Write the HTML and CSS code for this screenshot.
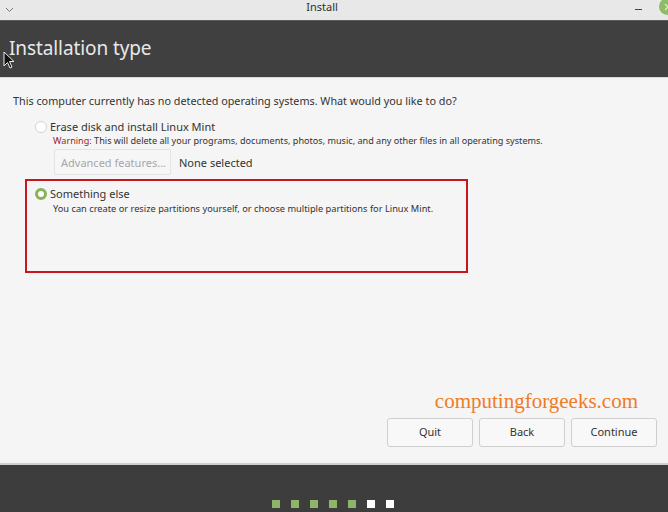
FILE: index.html
```html
<!DOCTYPE html>
<html>
<head>
<meta charset="utf-8">
<link rel="stylesheet" href="styles.css">
</head>
<body>
<div class="window">
  <div class="titlebar">
    <svg class="chev" width="9" height="6" viewBox="0 0 9 6"><path d="M1 1 L4.5 4.5 L8 1" fill="none" stroke="#777" stroke-width="1"/></svg>
    <div class="wtitle">Install</div>
    <div class="wctrls">
      <span class="minimize"></span>
      <span class="close"><svg width="10" height="10" viewBox="0 0 10 10"><path d="M2 2 L8 8 M8 2 L2 8" stroke="#d8ecc4" stroke-width="1.4"/></svg></span>
    </div>
  </div>
  <div class="header">
    <h1 class="htitle">Installation type</h1>
  </div>
  <div class="main">
    <p class="question">This computer currently has no detected operating systems. What would you like to do?</p>
    <div class="opt opt-erase">
      <div class="optrow"><span class="radio"></span><span class="optlabel">Erase disk and install Linux Mint</span></div>
      <div class="desc"><span class="warn">Warning:</span> This will delete all your programs, documents, photos, music, and any other files in all operating systems.</div>
      <div class="advrow"><span class="advbtn">Advanced features...</span><span class="none">None selected</span></div>
    </div>
    <div class="highlight">
      <div class="optrow"><span class="radio checked"></span><span class="optlabel">Something else</span></div>
      <div class="desc">You can create or resize partitions yourself, or choose multiple partitions for Linux Mint.</div>
    </div>
    <div class="spacer"></div>
    <div class="watermark">computingforgeeks.com</div>
    <div class="buttons">
      <button class="btn">Quit</button>
      <button class="btn">Back</button>
      <button class="btn">Continue</button>
    </div>
  </div>
  <div class="footer">
    <div class="dots">
      <span class="dot done"></span><span class="dot done"></span><span class="dot done"></span><span class="dot done"></span><span class="dot done"></span><span class="dot"></span><span class="dot"></span>
    </div>
  </div>
  <svg class="cursor" width="12" height="18" viewBox="0 0 12 18"><path d="M1 1 L1 15 L4.5 11.5 L7 17 L9 16 L6.5 10.5 L11 10.5 Z" fill="#111" stroke="#eee" stroke-width="1"/></svg>
</div>
</body>
</html>
```

FILE: styles.css
```css
* { box-sizing: border-box; }
html, body { margin: 0; padding: 0; }
body { width: 668px; height: 512px; overflow: hidden; font-family: "Noto Sans", "DejaVu Sans", sans-serif; background: #f5f5f5; }
.window { position: relative; width: 668px; height: 512px; display: flex; flex-direction: column; }
.titlebar { height: 21px; background: #e8e8e8; display: flex; align-items: center; position: relative; border-bottom: 1px solid #595959; }
.chev { margin-left: 5px; }
.wtitle { position: absolute; left: 0; right: 24px; text-align: center; font-size: 11px; color: #2f2f2f; top: 0; line-height: 14px; }
.wctrls { margin-left: auto; display: flex; align-items: center; gap: 17px; height: 100%; }
.minimize { width: 7px; height: 1px; background: #444; margin-top: -2px; }
.close { width: 17px; height: 17px; border-radius: 50%; background: #8dbb66; display: flex; align-items: center; justify-content: center; margin-right: -8px; margin-top: -7px; }
.header { height: 57px; background: #404040; display: flex; align-items: center; border-bottom: 1px solid #d8d8d8; }
.htitle { margin: 0 0 0 9px; font-weight: normal; font-size: 19px; color: #e8e8e8; letter-spacing: -0.1px; padding-bottom: 2px; }
.main { flex: 1; display: flex; flex-direction: column; padding: 16px 10px 16px 13px; }
.question { margin: 0; font-size: 10.8px; color: #333; line-height: 14px; }
.opt-erase { margin: 12px 0 0 22px; }
.optrow { display: flex; align-items: center; gap: 3px; height: 14px; }
.radio { width: 12px; height: 12px; border-radius: 50%; background: #fff; border: 1px solid #d4d4d4; }
.radio.checked { background: #ffffff; border: 3.5px solid #86b35a; }
.optlabel { font-size: 11px; color: #333; line-height: 14px; }
.desc { margin: 1px 0 0 18px; font-size: 9.1px; color: #333; line-height: 12px; }
.warn { color: #a01d1d; }
.advrow { display: flex; align-items: center; margin: 2px 0 0 19px; }
.advbtn { width: 117px; height: 26px; border: 1px solid #e4e4e4; border-radius: 2px; background: #f6f6f6; color: #a6a6a6; font-size: 11px; display: flex; align-items: center; padding-left: 6px; }
.none { font-size: 11px; color: #333; margin-left: 8px; }
.highlight { margin: 4px 0 0 12px; width: 443px; height: 94px; border: 2px solid #c8161d; padding: 6px 0 0 8px; }
.highlight .desc { margin-top: 2px; font-size: 9.25px; }
.spacer { flex: 1; }
.watermark { align-self: flex-end; margin-right: 20px; font-family: "Liberation Serif", serif; font-size: 21px; color: #f07b26; line-height: 24px; margin-bottom: 5px; }
.buttons { display: flex; justify-content: flex-end; gap: 6px; margin-right: 1px; }
.btn { width: 86px; height: 29px; border: 1px solid #cfcfcf; border-radius: 3px; background: #f8f8f8; font-family: "Noto Sans", sans-serif; font-size: 11px; color: #333; padding: 0 0 2px 0; }
.footer { height: 49px; background: #3d3d3d; border-top: 2px solid #d0d0d0; display: flex; justify-content: center; align-items: flex-end; }
.dots { display: flex; gap: 11px; margin-bottom: 4px; margin-left: -2px; }
.dot { width: 8px; height: 8px; background: #ffffff; }
.dot.done { background: #8fb56b; }
.cursor { position: absolute; left: 3px; top: 51px; }
```
